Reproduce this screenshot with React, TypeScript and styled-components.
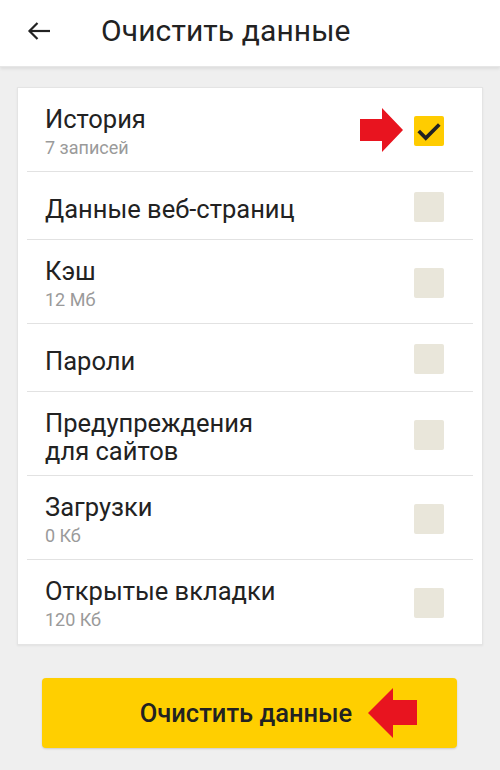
import React from "react";
import styled, { createGlobalStyle } from "styled-components";

const Global = createGlobalStyle`
  html, body { margin: 0; padding: 0; background: #efefef; }
  body { font-family: Roboto, "Noto Sans", Arial, sans-serif; -webkit-font-smoothing: antialiased; }
  * { box-sizing: border-box; }
`;

const Screen = styled.div`
  width: 500px;
  height: 770px;
  background: #efefef;
  display: flex;
  flex-direction: column;
  overflow: hidden;
`;

const Header = styled.header`
  height: 66px;
  flex-shrink: 0;
  background: #fff;
  display: flex;
  align-items: center;
  padding: 0 0 5px 26px;
  box-shadow: 0 1px 0 #e6e6e6, 0 3px 3px rgba(0, 0, 0, 0.08);
  position: relative;
  z-index: 1;
`;

const BackButton = styled.div`
  width: 26px;
  height: 26px;
  display: flex;
  align-items: center;
  justify-content: center;
  margin-right: 49px;
`;

const Title = styled.h1`
  margin: 0;
  font-size: 30px;
  font-weight: 400;
  color: #222;
  letter-spacing: 0.1px;
`;

const Main = styled.main`
  padding: 21px 17px 0;
`;

const Card = styled.div`
  background: #fff;
  border: 1px solid #e4e4e4;
  box-shadow: 0 1px 2px rgba(0, 0, 0, 0.06);
`;

const Row = styled.div<{ $last?: boolean }>`
  margin: 0 9px;
  min-height: 68px;
  padding: 17px 29px 10px 18px;
  display: flex;
  align-items: center;
  justify-content: space-between;
  border-bottom: 1px solid ${(p) => (p.$last ? "transparent" : "#e2e2e2")};
`;

const TextBlock = styled.div`
  display: flex;
  flex-direction: column;
`;

const ItemTitle = styled.div`
  font-size: 25.5px;
  line-height: 28px;
  color: #222;
`;

const ItemSub = styled.div`
  font-size: 18px;
  line-height: 26px;
  margin-top: 2px;
  color: #9a9a9a;
`;

const BoxWrap = styled.div`
  position: relative;
  width: 30px;
  height: 30px;
  flex-shrink: 0;
  align-self: center;
  transform: translateY(-2px);
`;

const Box = styled.div<{ $checked?: boolean }>`
  width: 30px;
  height: 30px;
  border-radius: 2px;
  background: ${(p) => (p.$checked ? "#ffcc00" : "#e9e6da")};
  display: flex;
  align-items: center;
  justify-content: center;
`;

const ArrowRight = styled.svg`
  position: absolute;
  left: -54px;
  top: -8px;
`;

const ButtonArea = styled.div`
  padding: 33px 43px 0 42px;
`;

const ClearButton = styled.button`
  position: relative;
  width: 100%;
  height: 70px;
  border: none;
  border-radius: 4px;
  background: #ffcf00;
  box-shadow: 0 1px 2px rgba(0, 0, 0, 0.15);
  font-family: Roboto, Arial, sans-serif;
  font-size: 25.5px;
  font-weight: 500;
  color: #222;
  display: flex;
  align-items: center;
  justify-content: center;
  padding: 0 7px 0 0;
`;

const ArrowLeft = styled.svg`
  position: absolute;
  left: 326px;
  top: 10px;
`;

type Item = { title: string[]; sub?: string; checked?: boolean };

const items: Item[] = [
  { title: ["История"], sub: "7 записей", checked: true },
  { title: ["Данные веб-страниц"] },
  { title: ["Кэш"], sub: "12 Мб" },
  { title: ["Пароли"] },
  { title: ["Предупреждения", "для сайтов"] },
  { title: ["Загрузки"], sub: "0 Кб" },
  { title: ["Открытые вкладки"], sub: "120 Кб" },
];

export default function App() {
  return (
    <Screen>
      <Global />
      <Header>
        <BackButton>
          <svg width="24" height="18" viewBox="0 0 24 18" fill="none">
            <path d="M2 9H23" stroke="#222" strokeWidth="2.2" />
            <path d="M10.5 1L2.5 9L10.5 17" stroke="#222" strokeWidth="2.2" />
          </svg>
        </BackButton>
        <Title>Очистить данные</Title>
      </Header>
      <Main>
        <Card>
          {items.map((it, i) => (
            <Row key={i} $last={i === items.length - 1}>
              <TextBlock>
                {it.title.map((t) => (
                  <ItemTitle key={t}>{t}</ItemTitle>
                ))}
                {it.sub && <ItemSub>{it.sub}</ItemSub>}
              </TextBlock>
              <BoxWrap>
                <Box $checked={it.checked}>
                  {it.checked && (
                    <svg width="26" height="26" viewBox="0 0 24 24">
                      <path d="M2.5 12L9 18.5L21.5 6" stroke="#222" strokeWidth="3.4" fill="none" />
                    </svg>
                  )}
                </Box>
                {it.checked && (
                  <ArrowRight width="44" height="44" viewBox="0 0 44 44">
                    <path d="M0 11H22V0L43 22L22 44V33H0Z" fill="#e8141f" />
                  </ArrowRight>
                )}
              </BoxWrap>
            </Row>
          ))}
        </Card>
      </Main>
      <ButtonArea>
        <ClearButton>
          Очистить данные
          <ArrowLeft width="50" height="50" viewBox="0 0 50 50">
            <path d="M0 25L25 0V12H49V37H25V50Z" fill="#e8141f" />
          </ArrowLeft>
        </ClearButton>
      </ButtonArea>
    </Screen>
  );
}
